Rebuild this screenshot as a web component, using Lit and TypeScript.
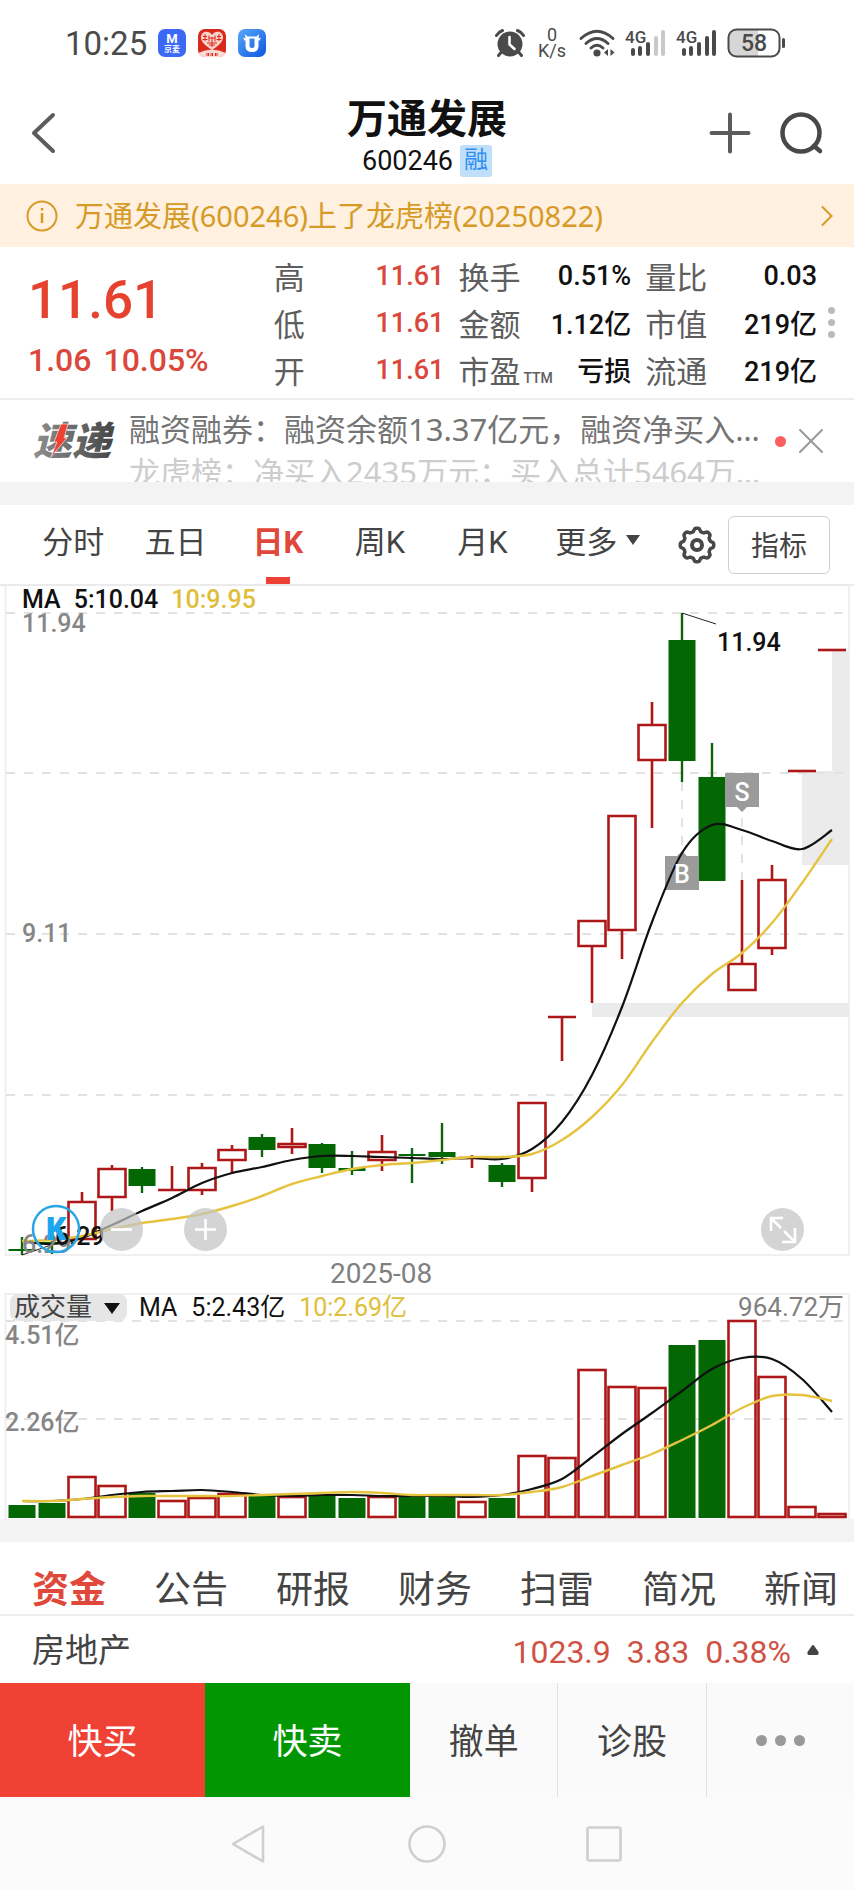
import { LitElement, html, svg, css } from "lit";
import { customElement, state } from "lit/decorators.js";
import { classMap } from "lit/directives/class-map.js";

type Kind = "up" | "down";
/** kind, high, body top, body bottom, low: y positions on the price panel */
type Candle = [Kind, number, number, number, number];

const STEP = 30;
const FIRST = 22;
const cx = (i: number) => FIRST + i * STEP;

const CANDLES: Candle[] = [
  ["down", 651, 664, 664, 669],
  ["down", 644, 657, 657, 668],
  ["up", 606, 616, 653, 653],
  ["up", 579, 583, 611, 625],
  ["down", 581, 583, 600, 607],
  ["up", 580, 604, 604, 604],
  ["up", 577, 582, 604, 609],
  ["up", 559, 564, 574, 588],
  ["down", 548, 551, 564, 571],
  ["up", 542, 558, 561, 568],
  ["down", 557, 558, 582, 587],
  ["down", 565, 582, 585, 589],
  ["up", 549, 566, 574, 585],
  ["down", 562, 569, 569, 597],
  ["down", 537, 566, 571, 578],
  ["up", 569, 572, 572, 582],
  ["down", 577, 579, 596, 601],
  ["up", 517, 517, 592, 606],
  ["up", 431, 431, 431, 475],
  ["up", 335, 335, 360, 417],
  ["up", 230, 230, 344, 373],
  ["up", 116, 139, 174, 242],
  ["down", 27, 54, 175, 196],
  ["down", 157, 191, 295, 295],
  ["up", 294, 378, 404, 404],
  ["up", 279, 294, 362, 369],
  ["up", 185, 185, 185, 185],
  ["up", 64, 64, 64, 64],
];
const MA5 = [655, 658, 652, 639, 625, 612, 597, 587, 581, 574, 570, 570, 571, 572, 573, 572, 573, 563, 536, 489, 421, 336, 267, 239, 244, 255, 263, 244];
const MA10 = [655, 654, 650, 643, 637, 633, 628, 620, 610, 598, 590, 583, 579, 577, 574, 571, 571, 568, 554, 531, 499, 456, 417, 388, 367, 337, 297, 253];

const VOLUMES: number[] = [213, 211, 184, 193, 201, 208, 205, 201, 203, 204, 203, 206, 204, 204, 203, 209, 206, 163, 165, 77, 94, 95, 53, 48, 28, 84, 214, 221];
const VMA5 = [208, 208, 206, 202, 199, 198, 197, 199, 202, 203, 202, 202, 203, 203, 203, 204, 202, 196, 186, 164, 141, 120, 98, 76, 65, 66, 86, 119];
const VMA10 = [208, 208, 206, 204, 203, 203, 203, 203, 202, 201, 200, 199, 200, 202, 202, 202, 202, 199, 194, 183, 172, 161, 147, 132, 115, 103, 102, 108];

/** Smooth curve through one value per trading day. */
function curve(values: number[]): string {
  const at = (i: number) => {
    const k = Math.max(0, Math.min(values.length - 1, i));
    return [cx(k), values[k]];
  };
  let d = `M${cx(0)} ${values[0]}`;
  for (let i = 0; i < values.length - 1; i++) {
    const [p0, p1, p2, p3] = [at(i - 1), at(i), at(i + 1), at(i + 2)];
    const c1 = [p1[0] + (p2[0] - p0[0]) / 6, p1[1] + (p2[1] - p0[1]) / 6];
    const c2 = [p2[0] - (p3[0] - p1[0]) / 6, p2[1] - (p3[1] - p1[1]) / 6];
    d += `C${c1.map((n) => n.toFixed(1)).join(" ")} ${c2.map((n) => n.toFixed(1)).join(" ")} ${p2.join(" ")}`;
  }
  return d;
}

const base = css`
  :host {
    display: block;
    font-family: Roboto, "Noto Sans CJK SC", sans-serif;
  }
  * {
    box-sizing: border-box;
  }
  button {
    font: inherit;
    color: inherit;
    background: none;
    border: 0;
    padding: 0;
    margin: 0;
    cursor: pointer;
  }
  svg {
    display: block;
    overflow: visible;
  }
`;

@customElement("status-bar")
class StatusBar extends LitElement {
  static styles = [
    base,
    css`
      .bar {
        display: flex;
        align-items: center;
        height: 86px;
        padding: 0 67px 0 65px;
        color: #4a4a4a;
      }
      .time {
        font-size: 33px;
        margin-right: 11px;
      }
      .apps {
        display: flex;
        gap: 12px;
        flex: 1;
      }
      .right {
        display: flex;
        align-items: center;
      }
      .rate {
        font-size: 18px;
        line-height: 16px;
        text-align: center;
        margin: 0 13px 0 13px;
      }
      .wifi {
        margin-right: 10px;
      }
      .sig {
        margin-right: 10px;
      }
    `,
  ];

  private signal(lit: number) {
    const bars = [
      [6, 20, 8],
      [13, 18, 10],
      [21, 14, 14],
      [29, 8, 20],
      [36, 2, 26],
    ];
    return html`<svg class="sig" width="41" height="30" viewBox="0 0 41 30" aria-hidden="true">
      <text x="0" y="15" font-size="17" font-weight="500" fill="#4a4a4a">4G</text>
      ${bars.map(([x, y, h], i) => svg`<rect x=${x} y=${y} width="4" height=${h} rx="2" fill=${i < lit ? "#4a4a4a" : "#c8c8c8"} />`)}
    </svg>`;
  }

  render() {
    return html`<div class="bar">
      <span class="time">10:25</span>
      <div class="apps">
        <svg width="28" height="28" viewBox="0 0 28 28" aria-hidden="true">
          <rect width="28" height="28" rx="7" fill="#3b69f6" />
          <text x="14" y="14" font-size="13" font-weight="700" text-anchor="middle" fill="#fff">M</text>
          <text x="14" y="23" font-size="8" font-weight="700" text-anchor="middle" fill="#fff">京麦</text>
        </svg>
        <svg width="28" height="28" viewBox="0 0 28 28" aria-hidden="true">
          <rect width="28" height="28" rx="7" fill="#d9291c" />
          <path d="M0 24Q14 17 28 24Q27 28 21 28H7Q1 28 0 24Z" fill="#fbd9d2" />
          <path d="M14 21C8 17 3 13 3 8.5C3 2 11 1 14 6C17 1 25 2 25 8.5C25 13 20 17 14 21Z" fill="#fbd3cb" />
          <path d="M5 7.500h4M7 5v7M4.500 10.500h5M11 6.500v6M10.500 9h7M14 8v10M17 6.500v6M19 7.500h4M21 5v7M18.500 10.500h5M9 14h10M11 16h6" stroke="#d9291c" stroke-width="1" fill="none" />
          <path d="M8.500 25.500h2.500M12.500 25.500h3M17 25.500h2.500" stroke="#d9291c" stroke-width="3" stroke-dasharray="1 .5" />
        </svg>
        <svg width="28" height="28" viewBox="0 0 28 28" aria-hidden="true">
          <defs>
            <linearGradient id="u" x1="0" y1="0" x2="1" y2="1">
              <stop offset="0" stop-color="#59a8f8" />
              <stop offset="1" stop-color="#0d56e0" />
            </linearGradient>
          </defs>
          <rect width="28" height="28" rx="7" fill="url(#u)" />
          <path d="M9.500 9V17Q9.500 21 14 21Q18.500 21 18.500 17V9" fill="none" stroke="#fff" stroke-width="4" />
          <path d="M5 8.500L7.500 9.500L7 5L9.500 7.500H18.500L21 5L20.500 9.500L23 8.500L21.500 11.500H18.500L17 9.500H11L9.500 11.500H6.500Z" fill="#fff" />
        </svg>
      </div>
      <div class="right">
        <svg width="30" height="28" viewBox="0 0 30 28" aria-hidden="true">
          <circle cx="15" cy="15" r="12.500" fill="#4a4a4a" />
          <path d="M1.500 6.500Q3.500 3 7.500 1.500M28.500 6.500Q26.500 3 22.500 1.500M6 23.500L3.500 26.500M24 23.500L26.500 26.500" stroke="#4a4a4a" stroke-width="3" stroke-linecap="round" fill="none" />
          <path d="M14.500 8V15.500L19.500 20" stroke="#fff" stroke-width="2.600" stroke-linecap="round" fill="none" />
        </svg>
        <div class="rate">0<br />K/s</div>
        <svg class="wifi" width="36" height="28" viewBox="0 0 36 28" aria-hidden="true">
          <g fill="none" stroke="#4a4a4a" stroke-width="3" stroke-linecap="round">
            <path d="M2 9.500Q18 -5 34 9.500" />
            <path d="M7 14.500Q18 4.500 29 14.500" />
            <path d="M12 19Q18 13.500 24 19" />
          </g>
          <circle cx="18" cy="24" r="3.600" fill="#4a4a4a" />
          <path d="M25 23.500l4-3.500v7zM35.500 23.500l-4-3.500v7z" fill="#4a4a4a" />
        </svg>
        ${this.signal(3)} ${this.signal(5)}
        <svg width="60" height="30" viewBox="0 0 60 30" aria-hidden="true">
          <path d="M9 1.500H31V28.500H9Q1.500 28.500 1.500 21V9Q1.500 1.500 9 1.500Z" fill="#d6d6d6" />
          <rect x="1.500" y="1.500" width="51" height="27" rx="8" fill="none" stroke="#4a4a4a" stroke-width="2" />
          <rect x="55" y="10" width="3" height="10" rx="1.500" fill="#4a4a4a" />
          <text x="27" y="23" font-size="23" font-weight="500" text-anchor="middle" fill="#4a4a4a">58</text>
        </svg>
      </div>
    </div>`;
  }
}

@customElement("stock-header")
class StockHeader extends LitElement {
  static styles = [
    base,
    css`
      .head {
        display: grid;
        grid-template-columns: 1fr auto 1fr;
        align-items: center;
        height: 98px;
        padding: 0 30px 4px 30px;
      }
      .names {
        padding-top: 8px;
        text-align: center;
        color: #111;
      }
      h1 {
        margin: 0;
        font-size: 40px;
        line-height: 48px;
        font-weight: 700;
      }
      .code {
        display: flex;
        align-items: center;
        justify-content: center;
        gap: 7px;
        font-size: 27px;
        line-height: 34px;
      }
      .tag {
        width: 32px;
        height: 32px;
        border-radius: 3px;
        background: #bfdffb;
        color: #2f8fee;
        font-size: 24px;
        line-height: 30px;
      }
      .tools {
        display: flex;
        justify-content: flex-end;
        gap: 28px;
      }
      .notice {
        display: flex;
        align-items: center;
        height: 63px;
        padding: 0 20px 0 26px;
        background: #fff0df;
        color: #d69a26;
        font-family: "Noto Sans", "Noto Sans CJK SC", sans-serif;
        font-size: 29px;
        line-height: 40px;
        text-decoration: none;
      }
      .msg {
        flex: 1;
        margin-left: 17px;
      }
    `,
  ];

  render() {
    return html`<header class="head">
        <button aria-label="返回">
          <svg width="30" height="42" viewBox="0 0 30 42"><path d="M23 3L4 21L23 39" fill="none" stroke="#5c5c5c" stroke-width="4" stroke-linecap="round" stroke-linejoin="round" /></svg>
        </button>
        <div class="names">
          <h1>万通发展</h1>
          <div class="code"><span>600246</span><span class="tag">融</span></div>
        </div>
        <div class="tools">
          <button aria-label="添加自选">
            <svg width="42" height="42" viewBox="0 0 42 42"><path d="M20 2.500V39.500M1.500 21H38.500" stroke="#5c5c5c" stroke-width="4" stroke-linecap="round" /></svg>
          </button>
          <button aria-label="搜索">
            <svg width="44" height="44" viewBox="0 0 44 44">
              <circle cx="21" cy="22" r="18.500" fill="none" stroke="#484848" stroke-width="4.500" />
              <path d="M34 35L40 40" stroke="#484848" stroke-width="4.500" stroke-linecap="round" />
            </svg>
          </button>
        </div>
      </header>
      <a class="notice" href="#notice">
        <svg width="32" height="32" viewBox="0 0 32 32" aria-hidden="true">
          <circle cx="16" cy="16" r="14.500" fill="none" stroke="#d69a26" stroke-width="2" />
          <path d="M16 13V23M16 8V10.500" stroke="#d69a26" stroke-width="2.500" />
        </svg>
        <span class="msg">万通发展(600246)上了龙虎榜(20250822)</span>
        <svg width="14" height="22" viewBox="0 0 14 22" aria-hidden="true"><path d="M2 1.500L11.500 11L2 20.500" fill="none" stroke="#d69a26" stroke-width="2" /></svg>
      </a>`;
  }
}

@customElement("quote-panel")
class QuotePanel extends LitElement {
  static styles = [
    base,
    css`
      .quote {
        display: flex;
        align-items: center;
        height: 153px;
        padding: 0 19px 0 28px;
        border-bottom: 2px solid #ededed;
      }
      .price {
        flex: 245 1 0;
        color: #e5432f;
      }
      .last {
        font-size: 53px;
        line-height: 64px;
        font-weight: 500;
      }
      .chg {
        display: flex;
        gap: 12px;
        margin-top: 10px;
        font-size: 32px;
        line-height: 36px;
        font-weight: 500;
        color: #d9483b;
      }
      .stats {
        flex: 542 1 0;
        display: grid;
        grid-template-columns: 170fr 172fr 171fr;
        grid-auto-rows: 47px;
        column-gap: 14px;
        margin: 0;
      }
      .cell {
        display: flex;
        align-items: center;
        justify-content: space-between;
      }
      dt {
        font-size: 31px;
        color: #5e5e5e;
      }
      .sub {
        font-size: 14px;
        font-weight: 500;
        margin-left: 3px;
      }
      dd {
        margin: 0;
        font-size: 27px;
        font-weight: 500;
        color: #111;
      }
      .red {
        color: #d9483b;
      }
      .more {
        display: grid;
        gap: 5px;
        margin-left: 11px;
      }
      .dot {
        width: 7px;
        height: 7px;
        border-radius: 50%;
        background: #bbb;
      }
      .news {
        display: flex;
        align-items: center;
        height: 82px;
        padding: 0 29px 0 30px;
      }
      .feed {
        flex: 1;
        align-self: stretch;
        overflow: hidden;
        margin-left: 7px;
        padding-top: 8px;
        font-family: "Noto Sans", "Noto Sans CJK SC", sans-serif;
        font-size: 31px;
        line-height: 43px;
        white-space: nowrap;
        color: #757575;
      }
      .next {
        color: #cdcdcd;
      }
      .badge {
        width: 11px;
        height: 11px;
        border-radius: 50%;
        background: #fb5f60;
        margin: 0 11px 0 4px;
      }
    `,
  ];

  private rows: [string, string, string, string?][] = [
    ["高", "11.61", "red"],
    ["换手", "0.51%", ""],
    ["量比", "0.03", ""],
    ["低", "11.61", "red"],
    ["金额", "1.12亿", ""],
    ["市值", "219亿", ""],
    ["开", "11.61", "red"],
    ["市盈", "亏损", "", "TTM"],
    ["流通", "219亿", ""],
  ];

  render() {
    return html`<section class="quote">
        <div class="price">
          <div class="last">11.61</div>
          <div class="chg"><span>1.06</span><span>10.05%</span></div>
        </div>
        <dl class="stats">
          ${this.rows.map(
            ([k, v, c, sub]) => html`<div class="cell">
              <dt>${k}${sub ? html`<span class="sub">${sub}</span>` : ""}</dt>
              <dd class=${classMap({ red: c === "red" })}>${v}</dd>
            </div>`,
          )}
        </dl>
        <button class="more" aria-label="更多行情">
          <span class="dot"></span><span class="dot"></span><span class="dot"></span>
        </button>
      </section>
      <section class="news">
        <svg width="92" height="60" viewBox="0 0 92 60" role="img" aria-label="速递">
          <defs>
            <linearGradient id="g" x1="0" y1="0" x2="1" y2="0">
              <stop offset="0" stop-color="#909090" />
              <stop offset="1" stop-color="#454545" />
            </linearGradient>
          </defs>
          <text x="3" y="44" font-size="39" font-weight="900" font-style="italic" fill="url(#g)">速递</text>
          <path d="M31 13H38L34 27H37L21 46L27 31H24Z" fill="#ee4133" stroke="#fff" stroke-width=".6" />
        </svg>
        <div class="feed">
          <div>融资融券：融资余额13.37亿元，融资净买入…</div>
          <div class="next">龙虎榜：净买入2435万元；买入总计5464万…</div>
        </div>
        <span class="badge"></span>
        <button aria-label="关闭">
          <svg width="28" height="28" viewBox="0 0 28 28"><path d="M3 3L25 25M25 3L3 25" stroke="#999" stroke-width="2" stroke-linecap="round" /></svg>
        </button>
      </section>`;
  }
}

@customElement("period-tabs")
class PeriodTabs extends LitElement {
  @state() private active = "日K";

  static styles = [
    base,
    css`
      .row {
        display: flex;
        align-items: center;
        height: 81px;
        padding: 0 24px 0 22px;
        border-bottom: 2px solid #ebebeb;
        font-size: 31px;
        color: #444;
      }
      .tab {
        position: relative;
        flex: 102 1 0;
        height: 79px;
        padding-bottom: 10px;
      }
      .tab.on {
        color: #e0483b;
        font-weight: 700;
      }
      .tab.on::after {
        content: "";
        position: absolute;
        left: calc(50% - 12px);
        bottom: 0;
        width: 24px;
        height: 7px;
        background: #ee4133;
      }
      .more {
        flex: 128 1 0;
        display: flex;
        align-items: center;
        justify-content: center;
        gap: 9px;
      }
      .gear {
        margin: 0 12px 0 16px;
      }
      .ind {
        width: 102px;
        height: 58px;
        padding-bottom: 2px;
        border: 1px solid #cfcfcf;
        border-radius: 6px;
        font-size: 28px;
      }
    `,
  ];

  private gear(): string {
    let d = "";
    for (let k = 0; k <= 96; k++) {
      const a = (k / 96) * Math.PI * 2;
      const r = 15.2 + 1.6 * Math.tanh(2 * Math.cos(8 * (a + Math.PI / 8)));
      d += `${k ? "L" : "M"}${(19 + r * Math.cos(a)).toFixed(2)} ${(19 + r * Math.sin(a)).toFixed(2)}`;
    }
    return d + "Z";
  }

  render() {
    return html`<nav class="row" role="tablist">
      ${["分时", "五日", "日K", "周K", "月K"].map(
        (t) => html`<button role="tab" class=${classMap({ tab: true, on: t === this.active })} aria-selected=${t === this.active} @click=${() => (this.active = t)}>${t}</button>`,
      )}
      <button class="tab more" aria-haspopup="menu">
        更多<svg width="14" height="10" viewBox="0 0 14 10" aria-hidden="true"><path d="M0 0H14L7 10Z" fill="#444" /></svg>
      </button>
      <button class="gear" aria-label="设置">
        <svg width="38" height="38" viewBox="0 0 38 38">
          <g transform="rotate(22.5 19 19)"><path d=${this.gear()} fill="none" stroke="#484848" stroke-width="3.500" stroke-linejoin="round" /></g>
          <circle cx="19" cy="19" r="5" fill="none" stroke="#484848" stroke-width="4" />
        </svg>
      </button>
      <button class="ind">指标</button>
    </nav>`;
  }
}

@customElement("kline-chart")
class KlineChart extends LitElement {
  static styles = [
    base,
    css`
      .panel {
        position: relative;
      }
      .plot {
        width: 100%;
        height: auto;
      }
      .grid {
        stroke: #e2e2e2;
        stroke-width: 2;
        stroke-dasharray: 9 9;
      }
      .frame {
        fill: none;
        stroke: #f0f0f0;
        stroke-width: 2;
      }
      .gap {
        fill: #ebebeb;
      }
      .up {
        fill: none;
        stroke: #ad1717;
        stroke-width: 2.6;
      }
      .down {
        fill: #036803;
        stroke: none;
      }
      .down-line {
        stroke: #0c650c;
        stroke-width: 2.4;
      }
      .ma {
        fill: none;
        stroke: #111;
        stroke-width: 2.2;
      }
      .ma10 {
        stroke: #e6c33e;
        stroke-width: 2.4;
      }
      .lead {
        stroke: #222;
        stroke-width: 1;
      }
      .legend {
        position: absolute;
        left: 22px;
        top: 0;
        display: flex;
        gap: 13px;
        font-size: 25px;
        line-height: 28px;
        font-weight: 500;
        color: #111;
      }
      .legend .y {
        color: #dfbe3a;
      }
      .axis {
        font-size: 25px;
        font-weight: 500;
        fill: #868686;
      }
      .mark {
        font-size: 25px;
        font-weight: 500;
        fill: #111;
      }
      .flag {
        fill: #9b9b9b;
      }
      .flag-t {
        font-size: 25px;
        font-weight: 500;
        fill: #fff;
        text-anchor: middle;
      }
      .logo {
        font-family: "Open Sans", sans-serif;
        font-size: 31px;
        font-weight: 800;
        fill: #1ba6ee;
        text-anchor: middle;
      }
      .zoom {
        position: absolute;
        bottom: 5px;
        width: 43px;
        height: 43px;
      }
      .zoom circle {
        fill: #c4c4c4;
        fill-opacity: 0.72;
      }
      .zoom path {
        fill: none;
        stroke: #fff;
        stroke-width: 2.6;
      }
      .minus {
        left: 100px;
      }
      .plus {
        left: 184px;
      }
      .full {
        right: 50px;
      }
      .date {
        height: 37px;
        padding-left: 330px;
        font-size: 28px;
        line-height: 35px;
        color: #808080;
      }
      .vlegend {
        position: absolute;
        left: 10px;
        right: 10px;
        top: 1px;
        display: flex;
        align-items: center;
        font-size: 25px;
        line-height: 27px;
        color: #111;
      }
      .pick {
        position: relative;
        margin-right: 12px;
      }
      .pick select {
        appearance: none;
        display: block;
        width: 117px;
        height: 27px;
        padding: 0 0 0 4px;
        border: 0;
        border-radius: 8px;
        background: #e6e6e6;
        color: #444;
        font: inherit;
        font-size: 26px;
        line-height: 27px;
      }
      .pick svg {
        position: absolute;
        right: 7px;
        top: 9px;
        pointer-events: none;
      }
      .vlegend .m {
        margin-right: 14px;
      }
      .vlegend .y {
        color: #dfbe3a;
      }
      .total {
        margin-left: auto;
        font-size: 26px;
        color: #808080;
      }
    `,
  ];

  private candle([kind, hi, top, bot, lo]: Candle, i: number) {
    const x = cx(i);
    if (kind === "down") {
      return svg`<path class="down-line" d="M${x} ${hi}V${lo}" /><rect class="down" x=${x - 13.5} y=${top === bot ? top - 1 : top} width="27" height=${Math.max(2, bot - top)} />`;
    }
    if (top === bot) {
      return svg`<path class="up" d="M${x - 14} ${top}H${x + 14}M${x} ${hi}V${lo}" />`;
    }
    return svg`<path class="up" d="M${x - 13.5} ${top}H${x + 13.5}V${bot}H${x - 13.5}ZM${x} ${hi}V${top}M${x} ${bot}V${lo}" />`;
  }

  private volume(top: number, i: number) {
    const x = cx(i);
    return CANDLES[i][0] === "down"
      ? svg`<rect class="down" x=${x - 13.5} y=${top - 1} width="27" height=${226 - top} />`
      : svg`<rect class="up" x=${x - 13.5} y=${top} width="27" height=${224 - top} />`;
  }

  render() {
    return html`<div class="panel">
        <svg class="plot" viewBox="0 0 854 670" role="img" aria-label="日K线图">
          <path class="frame" d="M5.500 0V669H849V0" />
          <rect class="gap" x="592" y="417" width="257" height="14" />
          <rect class="gap" x="802" y="185" width="47" height="94" />
          <rect class="gap" x="832" y="65" width="17" height="121" />
          <path class="grid" d="M6 27H849M6 187H849M6 348H849M6 509H849M682 196V265M742 232V294" />
          ${CANDLES.map((c, i) => this.candle(c, i))}
          <path class="flag" d="M665 270H677L682 265L687 270H699V304H665Z" />
          <path class="flag" d="M725 187H759V221H747L742 226L737 221H725Z" />
          <path class="ma" d=${curve(MA5)} />
          <path class="ma ma10" d=${curve(MA10)} />
          <text class="flag-t" x="682" y="297">B</text>
          <text class="flag-t" x="742" y="215">S</text>
          <path class="lead" d="M682 27L716 38M22 669L54 658" />
          <text class="axis" x="22" y="46">11.94</text>
          <text class="axis" x="22" y="356">9.11</text>
          <text class="axis" x="22" y="667">6.29</text>
          <text class="mark" x="717" y="65">11.94</text>
          <text class="mark" x="55" y="659">6.29</text>
          <circle cx="56" cy="643" r="23" fill="none" stroke="#2aa5e6" stroke-width="2.500" />
          <text class="logo" x="56" y="654">K</text>
        </svg>
        <div class="legend"><span>MA</span><span>5:10.04</span><span class="y">10:9.95</span></div>
        <button class="zoom minus" aria-label="缩小">
          <svg width="43" height="43" viewBox="0 0 43 43"><circle cx="21.500" cy="21.500" r="21.500" /><path d="M11 21.500H32" /></svg>
        </button>
        <button class="zoom plus" aria-label="放大">
          <svg width="43" height="43" viewBox="0 0 43 43"><circle cx="21.500" cy="21.500" r="21.500" /><path d="M11 21.500H32M21.500 11V32" /></svg>
        </button>
        <button class="zoom full" aria-label="全屏">
          <svg width="43" height="43" viewBox="0 0 43 43"><circle cx="21.500" cy="21.500" r="21.500" /><path d="M10 23V10H22M10 10L20 20M34 20V34H21M33 33L23 23" /></svg>
        </button>
      </div>
      <div class="date">2025-08</div>
      <div class="panel">
        <svg class="plot" viewBox="0 0 854 226" role="img" aria-label="成交量图">
          <path class="frame" d="M5.500 226V1H849V226" />
          <path class="grid" d="M6 28H849M6 126H849" />
          ${VOLUMES.map((v, i) => this.volume(v, i))}
          <path class="ma" d=${curve(VMA5)} />
          <path class="ma ma10" d=${curve(VMA10)} />
          <text class="axis" x="5" y="51">4.51亿</text>
          <text class="axis" x="5" y="138">2.26亿</text>
        </svg>
        <div class="vlegend">
          <span class="pick">
            <select aria-label="副图指标"><option>成交量</option></select>
            <svg width="16" height="11" viewBox="0 0 16 11" aria-hidden="true"><path d="M0 0H16L8 11Z" fill="#111" /></svg>
          </span>
          <span class="m">MA</span><span class="m">5:2.43亿</span><span class="y">10:2.69亿</span>
          <span class="total">964.72万</span>
        </div>
      </div>`;
  }
}

@customElement("info-tabs")
class InfoTabs extends LitElement {
  @state() private active = "资金";

  static styles = [
    base,
    css`
      .tabs {
        display: flex;
        justify-content: space-between;
        align-items: center;
        height: 74px;
        padding: 25px 16px 0 32px;
        border-bottom: 2px solid #ededed;
        font-size: 37px;
        line-height: 46px;
        color: #444;
      }
      .on {
        color: #e0483b;
        font-weight: 700;
      }
      .sector {
        display: flex;
        align-items: center;
        height: 67px;
        padding: 0 35px 0 32px;
        gap: 16px;
        font-size: 32px;
        color: #cf5245;
        text-decoration: none;
      }
      .name {
        flex: 1;
        padding-bottom: 4px;
        font-size: 33px;
        color: #444;
      }
      .num {
        padding-top: 4px;
      }
    `,
  ];

  render() {
    return html`<nav class="tabs" role="tablist">
        ${["资金", "公告", "研报", "财务", "扫雷", "简况", "新闻"].map(
          (t) => html`<button role="tab" class=${classMap({ on: t === this.active })} aria-selected=${t === this.active} @click=${() => (this.active = t)}>${t}</button>`,
        )}
      </nav>
      <a class="sector" href="#sector">
        <span class="name">房地产</span><span class="num">1023.9</span><span class="num">3.83</span><span class="num">0.38%</span>
        <svg width="12" height="10" viewBox="0 0 12 10" aria-hidden="true"><path d="M6 0Q7 0 8 2L11.500 7Q12 10 10 10H2Q0 10 .5 7L4 2Q5 0 6 0Z" fill="#444" /></svg>
      </a>`;
  }
}

@customElement("trade-bar")
class TradeBar extends LitElement {
  static styles = [
    base,
    css`
      .bar {
        display: flex;
        height: 114px;
        background: #fafafa;
        color: #444;
        font-size: 35px;
      }
      .act {
        flex: 148 1 0;
        padding-bottom: 4px;
        border-left: 1px solid #e1e1ea;
      }
      .buy,
      .sell {
        flex: 206 1 0;
        border: 0;
        color: #fff;
      }
      .buy {
        background: #ef4134;
      }
      .sell {
        background: #029702;
      }
      .sell + .act {
        border: 0;
      }
      .dots {
        display: flex;
        align-items: center;
        justify-content: center;
        gap: 8px;
        padding-bottom: 0;
      }
      .dot {
        width: 11px;
        height: 11px;
        border-radius: 50%;
        background: #999;
      }
      .sys {
        display: grid;
        grid-template-columns: repeat(3, 177px);
        justify-content: center;
        justify-items: center;
        align-items: center;
        height: 93px;
        background: #fbfbfb;
      }
    `,
  ];

  render() {
    return html`<div class="bar">
        <button class="act buy">快买</button>
        <button class="act sell">快卖</button>
        <button class="act">撤单</button>
        <button class="act">诊股</button>
        <button class="act dots" aria-label="更多"><span class="dot"></span><span class="dot"></span><span class="dot"></span></button>
      </div>
      <div class="sys">
        <button aria-label="后退">
          <svg width="38" height="40" viewBox="0 0 38 40"><path d="M32 2.500V37.500L2 20Z" fill="none" stroke="#cfcfcf" stroke-width="2.600" stroke-linejoin="round" /></svg>
        </button>
        <button aria-label="主页">
          <svg width="40" height="40" viewBox="0 0 40 40"><circle cx="20" cy="20" r="17.500" fill="none" stroke="#cfcfcf" stroke-width="2.600" /></svg>
        </button>
        <button aria-label="最近任务">
          <svg width="36" height="36" viewBox="0 0 36 36"><rect x="1.500" y="1.500" width="33" height="33" rx="2" fill="none" stroke="#cfcfcf" stroke-width="2.600" /></svg>
        </button>
      </div>`;
  }
}

@customElement("app-root")
class AppRoot extends LitElement {
  static styles = [
    base,
    css`
      :host {
        background: #fff;
      }
      .band {
        height: 23px;
        background: #f3f3f3;
      }
    `,
  ];

  render() {
    return html`<status-bar></status-bar>
      <stock-header></stock-header>
      <quote-panel></quote-panel>
      <div class="band"></div>
      <period-tabs></period-tabs>
      <kline-chart></kline-chart>
      <div class="band"></div>
      <info-tabs></info-tabs>
      <trade-bar></trade-bar>`;
  }
}
